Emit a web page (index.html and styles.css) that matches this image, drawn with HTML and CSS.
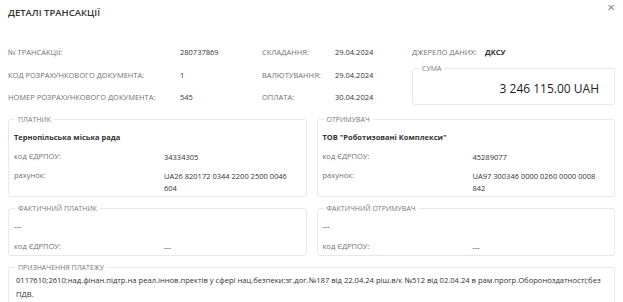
FILE: index.html
```html
<!doctype html>
<html><head>
<meta charset="utf-8">
<title>Деталі трансакції</title>
<link rel="stylesheet" href="styles.css">
</head><body>
<div class="dialog">
	<div class="header">
		<h1>ДЕТАЛІ ТРАНСАКЦІЇ</h1>
		<span class="close">&#x2715;</span>
	</div>

	<div class="summary">
		<span class="label">№ ТРАНСАКЦІЇ:</span><span class="value">280737869</span>
		<span class="label">СКЛАДАННЯ:</span><span class="value">29.04.2024</span>
		<span class="label">ДЖЕРЕЛО ДАНИХ:</span><span class="value bold">ДКСУ</span>

		<span class="label">КОД РОЗРАХУНКОВОГО ДОКУМЕНТА:</span><span class="value">1</span>
		<span class="label">ВАЛЮТУВАННЯ:</span><span class="value">29.04.2024</span>
		<fieldset class="box amount">
			<legend>СУМА</legend>
			<div class="sum">3 246 115.00 UAH</div>
		</fieldset>

		<span class="label">НОМЕР РОЗРАХУНКОВОГО ДОКУМЕНТА:</span><span class="value">545</span>
		<span class="label">ОПЛАТА:</span><span class="value">30.04.2024</span>
	</div>

	<div class="pair">
		<fieldset class="box">
			<legend>ПЛАТНИК</legend>
			<div class="name">Тернопільська міська рада</div>
			<div class="rows">
				<span>код ЄДРПОУ:</span><span class="value">34334305</span>
				<span>рахунок:</span><span class="value">UA26 820172 0344 2200 2500 0046 604</span>
			</div>
		</fieldset>
		<fieldset class="box">
			<legend>ОТРИМУВАЧ</legend>
			<div class="name">ТОВ "Роботизовані Комплекси"</div>
			<div class="rows">
				<span>код ЄДРПОУ:</span><span class="value">45289077</span>
				<span>рахунок:</span><span class="value">UA97 300346 0000 0260 0000 0008 842</span>
			</div>
		</fieldset>
	</div>

	<div class="pair">
		<fieldset class="box">
			<legend>ФАКТИЧНИЙ ПЛАТНИК</legend>
			<div class="name plain">---</div>
			<div class="rows">
				<span>код ЄДРПОУ:</span><span class="value">---</span>
			</div>
		</fieldset>
		<fieldset class="box">
			<legend>ФАКТИЧНИЙ ОТРИМУВАЧ</legend>
			<div class="name plain">---</div>
			<div class="rows">
				<span>код ЄДРПОУ:</span><span class="value">---</span>
			</div>
		</fieldset>
	</div>

	<fieldset class="box purpose">
		<legend>ПРИЗНАЧЕННЯ ПЛАТЕЖУ</legend>
		<p>0117610;2610;над.фінан.підтр.на реал.іннов.пректів у сфері нац.безпеки;зг.дог.№187 від 22.04.24 ріш.в/к №512 від 02.04.24 в рам.прогр.Обороноздатності;без ПДВ.</p>
	</fieldset>
</div>
</body></html>
```

FILE: styles.css
```css
body {
	margin: 0;
	background: #fff;
	color: #333;
	font: 7.5px/10px 'Open Sans', 'Noto Sans', sans-serif;
}

.dialog {
	padding: 0 8px;
}

.header {
	display: flex;
	justify-content: space-between;
	align-items: flex-start;
	height: 41px;
}

h1 {
	margin: 7px 0 0 0;
	font-size: 9.5px;
	line-height: 12px;
	font-weight: 600;
	color: #333;
}

.close {
	margin-top: 2px;
	font-size: 10px;
	color: #888;
}

.summary {
	display: grid;
	grid-template-columns: 172px 82px 73px 77px 73px 1fr;
	grid-auto-rows: 22.5px;
	align-items: center;
}

.label {
	color: #707070;
}

.value {
	color: #333;
}

.bold {
	font-weight: 700;
}

.box {
	margin: 0;
	padding: 0 5px 2px 5px;
	border: 1px solid #e6e8ee;
	border-radius: 3px;
	min-width: 0;
}

legend {
	padding: 0 3px;
	margin-left: 1px;
	color: #777;
	font-size: 7px;
}

.amount {
	grid-column: 5 / 7;
	grid-row: 2 / 4;
	align-self: start;
	margin-top: 0;
	height: 39px;
	padding: 0 15px 0 5px;
}

.sum {
	text-align: right;
	font-size: 12px;
	line-height: 18px;
	margin-top: 6px;
	font-weight: 500;
	color: #222;
}

.pair {
	display: grid;
	grid-template-columns: 1fr 1fr;
	gap: 10px;
	margin-top: 6px;
}

.name {
	margin: 7px 0 9px 0;
	font-weight: 700;
	color: #333;
}

.name.plain {
	font-weight: 400;
	margin: 7px 0 10px 0;
}

.rows {
	display: grid;
	grid-template-columns: 150px 1fr;
	row-gap: 7px;
	color: #707070;
}

.rows .value {
	padding-right: 4px;
	line-height: 12px;
}

.pair + .pair {
	margin-top: 7px;
}

.purpose {
	margin-top: 7px;
	padding-right: 2px;
}

.purpose p {
	margin: 0;
	padding-left: 2px;
	font-size: 7.6px;
	line-height: 14px;
}
```
